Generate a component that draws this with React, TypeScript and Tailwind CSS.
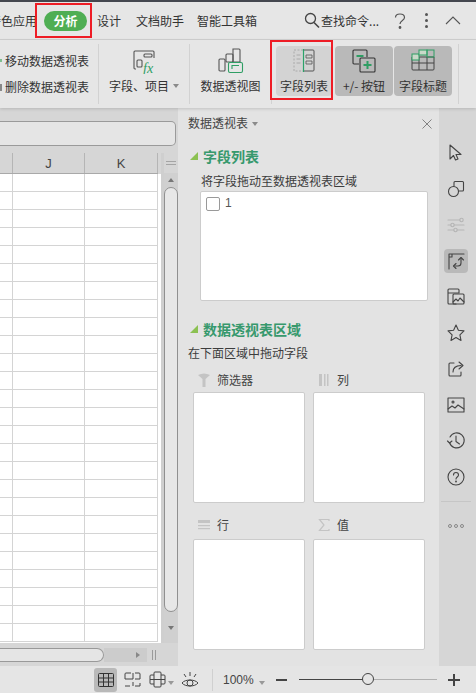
import React from "react";

const G = "#2f9e64";
const D = "#444444";

function Sep({ cls = "" }: { cls?: string }) {
  return <div className={"w-px self-stretch bg-[#d2d2d2] my-[4px] " + cls} />;
}

function Caret({ c = "#8a8a8a" }: { c?: string }) {
  return <span className="inline-block w-0 h-0 border-x-[3.5px] border-x-transparent border-t-[4px]" style={{ borderTopColor: c }} />;
}

function Tri() {
  return (
    <svg width="8" height="8" viewBox="0 0 8 8" className="shrink-0">
      <path d="M8 0V8H0Z" fill="#8cc152" />
    </svg>
  );
}

function SideIcon({ children, active }: { children: React.ReactNode; active?: boolean }) {
  return (
    <div className={"w-[24px] h-[24px] rounded-[4px] flex items-center justify-center " + (active ? "bg-[#b9b9b9]" : "")}>
      <svg width="20" height="20" viewBox="0 0 20 20" fill="none" stroke={D} strokeWidth="1.1" strokeLinejoin="round" strokeLinecap="round">
        {children}
      </svg>
    </div>
  );
}

function FieldBox({ icon, label, labelCls = "" }: { icon: React.ReactNode; label: string; labelCls?: string }) {
  return (
    <div className="w-[112px]">
      <div className={"h-[26px] flex items-center pl-[5px] gap-[7px] text-[12px] text-[#444] " + labelCls}>
        <svg width="12" height="14" viewBox="0 0 12 14" fill="none" className="shrink-0">{icon}</svg>
        <span>{label}</span>
      </div>
      <div className="bg-white border border-[#cccccc] rounded-[2px] h-[111px]" />
    </div>
  );
}

export default function App() {
  const rows = Array.from({ length: 26 });
  return (
    <div className="w-[476px] h-[693px] overflow-hidden flex flex-col bg-[#e4e4e4] text-[#333] text-[12px] leading-none" style={{ fontFamily: '"Noto Sans CJK SC","Liberation Sans",sans-serif' }}>
      <div className="h-[2px] bg-[#44474f] shrink-0" />

      {/* Tabs */}
      <div className="h-[38px] shrink-0 flex items-center relative border-b border-[#d0d0d0] bg-[#e6e6e6] text-[#333]">
        <div className="w-[37px] overflow-hidden flex justify-end shrink-0">
          <span className="whitespace-nowrap">特色应用</span>
        </div>
        <div className="relative ml-[7px] w-[43px] h-[20px] rounded-full bg-[#4fae53] text-white font-bold flex items-center justify-center">
          分析
          <span className="absolute left-[-9px] top-[-8px] w-[57px] h-[35px] border-2 border-[#ee1c25]" />
        </div>
        <span className="ml-[10px]">设计</span>
        <span className="ml-[15px]">文档助手</span>
        <span className="ml-[13px]">智能工具箱</span>
        <svg width="16" height="17" viewBox="0 0 16 17" fill="none" stroke={D} strokeWidth="1.3" className="ml-[47px]">
          <circle cx="6.5" cy="6.5" r="5" />
          <path d="M10 10.5l5 5" strokeWidth="1.6" />
        </svg>
        <span className="ml-[1px] w-[60px] whitespace-nowrap">查找命令...</span>
        <svg width="12" height="16" viewBox="0 0 12 16" fill="none" stroke="#555" strokeWidth="1.2" className="ml-[13px]">
          <path d="M1.5 4.5C1.5 2.3 3.5 1 6 1s4.5 1.4 4.5 3.5C10.500 7.500 6 7.500 6 11" />
          <circle cx="6" cy="14.500" r=".8" fill="#555" />
        </svg>
        <div className="ml-[19px] flex flex-col gap-[3px]">
          <span className="w-[3px] h-[3px] bg-[#555] rounded-full" />
          <span className="w-[3px] h-[3px] bg-[#555] rounded-full" />
          <span className="w-[3px] h-[3px] bg-[#555] rounded-full" />
        </div>
        <svg width="16" height="9" viewBox="0 0 16 9" fill="none" stroke="#555" strokeWidth="1.1" className="ml-[17px]">
          <path d="M1 8l7-7 7 7" />
        </svg>
      </div>

      {/* Ribbon */}
      <div className="h-[68px] shrink-0 flex items-stretch bg-[#e6e6e6] shadow-[0_1px_3px_rgba(0,0,0,0.15)] relative z-10">
        <div className="w-[98px] shrink-0 flex flex-col justify-center gap-[14px] pl-[5px] relative">
          <span className="absolute left-[0px] top-[19px] w-[2px] h-[3px] bg-[#7fbf8f]" />
          <span className="absolute left-[0px] top-[44px] w-[2px] h-[7px] bg-[#888]" />
          <span className="whitespace-nowrap h-[12px] mt-[-1px]">移动数据透视表</span>
          <span className="whitespace-nowrap h-[12px]">删除数据透视表</span>
        </div>
        <Sep />
        <div className="w-[90px] shrink-0 flex flex-col items-center pt-[10px]">
          <svg width="26" height="24" viewBox="0 0 26 24" fill="none" stroke="#555" strokeWidth="1.1" className="ml-[3px]">
            <path d="M3 19H2a1 1 0 0 1-1-1V2a1 1 0 0 1 1-1h18a1 1 0 0 1 1 1v6" />
            <rect x="4" y="10" width="5" height="7" rx="1" />
            <rect x="11" y="4" width="8" height="3" rx="1" />
            <text x="10" y="23" fontSize="14" fontStyle="italic" fill={G} stroke="none" fontFamily="Liberation Serif, serif">fx</text>
          </svg>
          <div className="h-[12px] mt-[6px] flex items-center gap-[4px] whitespace-nowrap">字段、项目<Caret /></div>
        </div>
        <Sep />
        <div className="w-[81px] shrink-0 flex flex-col items-center pt-[8px]">
          <svg width="26" height="26" viewBox="0 0 26 26" fill="none" stroke="#555" strokeWidth="1.1">
            <rect x="1" y="11" width="6" height="12" rx="1" />
            <rect x="8" y="6" width="7" height="8" rx="1" />
            <path d="M15 1h6a1 1 0 0 1 1 1v12h-7z" />
            <rect x="10.500" y="14.500" width="14" height="10" rx="1.500" stroke={G} fill="#e6e6e6" />
            <path d="M14 21v-3.500h7" stroke={G} />
          </svg>
          <div className="h-[12px] mt-[6px] whitespace-nowrap">数据透视图</div>
        </div>
        <Sep />
        <div className="ml-[4px] relative w-[56px] shrink-0 mt-[6px] h-[50px] rounded-[4px] bg-[#d3d3d3] flex flex-col items-center pt-[3px]">
          <svg width="22" height="24" viewBox="0 0 22 24" fill="none" stroke="#555" strokeWidth="1" className="shrink-0">
            <path d="M10 1H1v21h9" stroke="#aaa" strokeDasharray="2 1.500" />
            <path d="M3.500 6h4M3.500 10h4M3.500 14h4" stroke="#aaa" />
            <path d="M11 1h9a1 1 0 0 1 1 1v19a1 1 0 0 1-1 1h-9" />
            <path d="M13 6h6v3h-6zM13 12h6v3h-6z" strokeWidth=".8" />
            <path d="M10.500 0v23" stroke="#2ba36a" strokeWidth="1.2" />
          </svg>
          <div className="h-[12px] mt-[7px] whitespace-nowrap">字段列表</div>
          <span className="absolute left-[-6px] top-[-6px] w-[63px] h-[60px] border-2 border-[#ee1c25]" />
        </div>
        <div className="ml-[3px] w-[58px] shrink-0 mt-[6px] h-[50px] rounded-[4px] bg-[#b9b9b9] flex flex-col items-center pt-[3px]">
          <svg width="24" height="24" viewBox="0 0 24 24" fill="none" stroke="#333" strokeWidth="1.1" className="shrink-0">
            <path d="M7 15H2a1 1 0 0 1-1-1V2a1 1 0 0 1 1-1h12a1 1 0 0 1 1 1v6" />
            <rect x="8" y="9" width="15" height="14" rx="1" />
            <path d="M4.500 7h7" stroke={G} strokeWidth="2" />
            <path d="M11.500 16h8M15.500 12v8" stroke={G} strokeWidth="2" />
          </svg>
          <div className="h-[12px] mt-[7px] whitespace-nowrap">+/- 按钮</div>
        </div>
        <div className="ml-[1px] w-[58px] shrink-0 mt-[6px] h-[50px] rounded-[4px] bg-[#b9b9b9] flex flex-col items-center pt-[3px]">
          <svg width="24" height="24" viewBox="0 0 24 24" fill="none" stroke="#444" strokeWidth="1" className="shrink-0">
            <path d="M1 8h22v12a1 1 0 0 1-1 1H2a1 1 0 0 1-1-1z" />
            <path d="M1 14h22M8 8v13M16 8v13" />
            <rect x="1" y="5" width="7" height="6" stroke={G} fill="#c9d9c9" />
            <rect x="8" y="1" width="8" height="5" stroke={G} fill="#c9d9c9" />
            <rect x="16" y="1" width="7" height="7" stroke={G} />
          </svg>
          <div className="h-[12px] mt-[7px] whitespace-nowrap">字段标题</div>
        </div>
        <div className="ml-[6px]"><Sep cls="h-[60px]" /></div>
      </div>

      {/* Main */}
      <div className="flex-1 min-h-0 flex">
        {/* Sheet */}
        <div className="w-[178px] shrink-0 flex flex-col bg-[#d6d6d6] overflow-hidden">
          <div className="h-[45px] shrink-0 pt-[13px] pr-[2px]">
            <div className="h-[25px] bg-[#e5e5e5] border border-[#9a9a9a] border-l-0 rounded-r-[5px]" />
          </div>
          <div className="h-[490px] flex">
            <div className="w-[158px] shrink-0 flex flex-col">
              <div className="h-[21px] shrink-0 flex border-b border-[#a9a9a9] text-[13px] text-[#444]" style={{ fontFamily: '"Liberation Sans",sans-serif' }}>
                <div className="w-[13px] border-r border-[#b5b5b5]" />
                <div className="w-[72px] border-r border-[#b5b5b5] flex items-center justify-center">J</div>
                <div className="w-[73px] border-r border-[#b5b5b5] flex items-center justify-center">K</div>
              </div>
              <div className="bg-white flex-1 overflow-hidden">
                {rows.map((_, i) => (
                  <div key={i} className="h-[18px] flex border-b border-[#d4d4d4]">
                    <div className="w-[13px] border-r border-[#d4d4d4]" />
                    <div className="w-[72px] border-r border-[#d4d4d4]" />
                    <div className="w-[73px] border-r border-[#d4d4d4]" />
                  </div>
                ))}
              </div>
            </div>
            <div className="w-[3px] shrink-0 bg-white mt-[21px]" />
            <div className="w-[3px] shrink-0 bg-[#cfcfcf]" />
            <div className="w-[14px] shrink-0 flex flex-col items-center bg-[#d0d0d0] relative">
              <div className="h-[20px] w-full bg-[#d6d6d6] flex flex-col items-center justify-center gap-[2px]">
                <span className="w-[10px] h-px bg-[#a5a5a5]" />
                <span className="w-[10px] h-px bg-[#a5a5a5]" />
              </div>
              <div className="h-[14px] flex items-center justify-center">
                <span className="w-0 h-0 border-x-[3.5px] border-x-transparent border-b-[4px] border-b-[#777]" />
              </div>
              <div className="w-[14px] h-[425px] rounded-[7px] bg-[#e7e7e7] border border-[#909090]" />
              <div className="flex-1 flex items-center justify-center">
                <Caret c="#777" />
              </div>
            </div>
          </div>
          <div className="h-[23px] shrink-0 flex items-center bg-[#d6d6d6]">
            <div className="w-[104px] h-[14px] bg-[#e5e5e5] border border-[#999] border-l-0 rounded-r-[7px]" />
            <div className="w-[43px] h-[14px] bg-[#cccccc] flex items-center justify-end pr-[7px]">
              <span className="w-0 h-0 border-y-[3.5px] border-y-transparent border-l-[4px] border-l-[#888]" />
            </div>
            <div className="ml-[5px] flex gap-[2px] h-[10px]">
              <span className="w-px bg-[#9a9a9a]" />
              <span className="w-px bg-[#9a9a9a]" />
            </div>
          </div>
        </div>

        {/* Panel */}
        <div className="w-[261px] shrink-0 bg-[#e3e3e3] flex flex-col">
          <div className="h-[23px] shrink-0 flex items-end pl-[10px] pr-[7px] text-[#444]">
            <span className="h-[14px]">数据透视表</span>
            <span className="ml-[4px] mb-[4px]"><Caret /></span>
            <svg width="10" height="10" viewBox="0 0 10 10" stroke="#777" strokeWidth=".9" className="ml-auto mb-[2px]">
              <path d="M.5.5l9 9M9.500.5l-9 9" />
            </svg>
          </div>
          <div className="mt-[17px] ml-[12px] flex items-center gap-[5px] h-[16px]">
            <Tri />
            <span className="text-[14px] font-bold text-[#37996d]">字段列表</span>
          </div>
          <div className="mt-[11px] ml-[23px] h-[13px] text-[#3c3c3c]">将字段拖动至数据透视表区域</div>
          <div className="mt-[3px] ml-[22px] w-[228px] h-[110px] bg-white border border-[#cccccc] rounded-[2px] flex items-start pt-[5px] pl-[5px] gap-[5px]">
            <span className="w-[14px] h-[14px] bg-white border border-[#999] rounded-[2px]" />
            <span className="text-[#555]" style={{ fontFamily: '"Liberation Sans",sans-serif' }}>1</span>
          </div>
          <div className="mt-[20px] ml-[12px] flex items-center gap-[5px] h-[16px]">
            <Tri />
            <span className="text-[14px] font-bold text-[#37996d]">数据透视表区域</span>
          </div>
          <div className="mt-[10px] ml-[10px] h-[13px] text-[#3c3c3c]">在下面区域中拖动字段</div>
          <div className="mt-[6px] ml-[15px] flex gap-[8px]">
            <FieldBox labelCls="pt-[2px]" label="筛选器" icon={<path d="M0 2q6-3 12 0l-4.500 4v8h-3V6z" fill="#c4c4c4" />} />
            <FieldBox labelCls="pt-[2px]" label="列" icon={<g fill="#c4c4c4"><rect x="1" y="1" width="3" height="12" /><rect x="6" y="1" width="1.500" height="12" /><rect x="9" y="1" width="1.500" height="12" /></g>} />
          </div>
          <div className="mt-[10px] ml-[15px] flex gap-[8px]">
            <FieldBox labelCls="pb-[2px]" label="行" icon={<g fill="#c4c4c4"><rect x="0" y="2" width="12" height="3" /><rect x="0" y="7" width="12" height="1.200" /><rect x="0" y="10" width="12" height="1.200" /></g>} />
            <FieldBox labelCls="pb-[2px]" label="值" icon={<path d="M11 3V1.500H1.500L6 7l-4.500 5.500H11V11" stroke="#c4c4c4" strokeWidth="1.200" />} />
          </div>
        </div>

        {/* Side toolbar */}
        <div className="w-[37px] shrink-0 bg-[#d6d6d6] flex flex-col items-center pt-[33px] gap-[12px] pr-[3px]">
          <SideIcon>
            <path d="M4 2v14l3.500-3.500 2 4.500 2.500-1-2-4.500h5z" />
          </SideIcon>
          <SideIcon>
            <path d="M8 7V3.500a1 1 0 0 1 1-1h7.500a1 1 0 0 1 1 1V11a1 1 0 0 1-1 1H13" />
            <circle cx="7.500" cy="12.500" r="5" />
          </SideIcon>
          <SideIcon>
            <g stroke="#b5b5b5">
              <path d="M2 5h12M2 10h3M8 10h10M2 15h6M11 15h7" />
              <circle cx="15.500" cy="5" r="1.700" />
              <circle cx="6.500" cy="10" r="1.700" />
              <circle cx="9.500" cy="15" r="1.700" />
            </g>
          </SideIcon>
          <SideIcon active>
            <path d="M3 18V3M3 3h15M6 3v3M3 6h3" />
            <path d="M8 15h4a3 3 0 0 0 3-3V7" />
            <path d="M10 12.500L7.500 15l2.500 2.500M12.500 9L15 6.500 17.500 9" />
          </SideIcon>
          <SideIcon>
            <path d="M10 17H3a1 1 0 0 1-1-1V3a1 1 0 0 1 1-1h9a1 1 0 0 1 1 1v3M2 6h11" />
            <rect x="7" y="7" width="11" height="10" rx="1" />
            <path d="M7 15l3-3 2 2 2-3 4 4" />
          </SideIcon>
          <SideIcon>
            <path d="M10 2l2.400 5.200 5.600.7-4.100 3.900 1.100 5.600L10 14.600l-5 2.800 1.100-5.600L2 7.900l5.600-.7z" />
          </SideIcon>
          <SideIcon>
            <path d="M8 4H4a1 1 0 0 0-1 1v11a1 1 0 0 0 1 1h10a1 1 0 0 0 1-1v-3" />
            <path d="M7 13c0-4 3-6.500 8-6.500M13 3l4 3.500-4 3.500" />
          </SideIcon>
          <SideIcon>
            <rect x="2" y="3" width="16" height="14" />
            <circle cx="7" cy="7" r="1" />
            <path d="M2 14l4-3 3 2 3-3 6 4" />
          </SideIcon>
          <SideIcon>
            <path d="M3.500 12a7.500 7.500 0 1 0 .5-5.500" transform="translate(0 -.5)" />
            <path d="M1.500 10l2 2 2.500-2" />
            <path d="M10 5v5.500l3.500 2.500" />
          </SideIcon>
          <SideIcon>
            <circle cx="10" cy="10" r="8" />
            <path d="M7.500 8c0-1.500 1-2.500 2.500-2.500s2.500 1 2.500 2.500c0 2-2.500 2-2.500 4" />
            <circle cx="10" cy="14.500" r=".4" />
          </SideIcon>
          <div className="w-[30px] h-px bg-[#c6c6c6]" />
          <div className="flex gap-[2px] mt-[10px]">
            <span className="w-[4px] h-[4px] rounded-full border border-[#888]" />
            <span className="w-[4px] h-[4px] rounded-full border border-[#888]" />
            <span className="w-[4px] h-[4px] rounded-full border border-[#888]" />
          </div>
        </div>
      </div>

      {/* Status bar */}
      <div className="h-[27px] shrink-0 bg-[#e5e5e5] flex items-center text-[#444]">
        <div className="ml-[94px] w-[23px] h-[24px] rounded-[3px] bg-[#b9b9b9] flex items-center justify-center">
          <svg width="16" height="14" viewBox="0 0 16 14" fill="none" stroke="#333" strokeWidth="1">
            <rect x=".5" y=".5" width="15" height="13" rx="1" />
            <path d="M.5 5h15M.5 9h15M5.500.5v13M10.500.5v13" />
          </svg>
        </div>
        <svg width="17" height="15" viewBox="0 0 17 15" fill="none" stroke="#444" strokeWidth="1" className="ml-[7px]">
          <path d="M7 1H2a1 1 0 0 0-1 1v5h8V1M11 1h4a1 1 0 0 1 1 1v5h-5M1 14h5M9 14v-4M11 14h5v-3" />
        </svg>
        <svg width="17" height="17" viewBox="0 0 17 17" fill="none" stroke="#444" strokeWidth="1" className="ml-[8px]">
          <path d="M5 4H2a1 1 0 0 0-1 1v7a1 1 0 0 0 1 1h3M12 4h3a1 1 0 0 1 1 1v7a1 1 0 0 1-1 1h-3M5 2a1 1 0 0 1 1-1h5a1 1 0 0 1 1 1v13a1 1 0 0 1-1 1H6a1 1 0 0 1-1-1zM1 8.500h15" />
        </svg>
        <span className="ml-[2px]"><Caret c="#999" /></span>
        <svg width="18" height="18" viewBox="0 0 18 18" fill="none" stroke="#444" strokeWidth="1" className="ml-[7px]">
          <path d="M1 12c3-4 13-4 16 0-3 4-13 4-16 0z" />
          <circle cx="9" cy="12" r="3" />
          <path d="M9 1v4M3 3l2 3M15 3l-2 3" />
        </svg>
        <div className="ml-[13px] w-px h-[22px] bg-[#d0d0d0]" />
        <span className="ml-[10px] text-[12px] text-[#444]" style={{ fontFamily: '"Liberation Sans",sans-serif' }}>100%</span>
        <span className="ml-[5px]"><Caret c="#999" /></span>
        <span className="ml-[11px] w-[11px] h-[2px] bg-[#444]" />
        <div className="ml-[12px] w-[138px] h-px bg-[#b0b0b0] relative">
          <div className="w-[65px] h-px bg-[#444]" />
          <span className="absolute left-[63px] top-[-6px] w-[12px] h-[12px] rounded-full bg-[#e5e5e5] border border-[#444]" />
        </div>
        <svg width="12" height="12" viewBox="0 0 12 12" stroke="#444" strokeWidth="2" className="ml-[11px]">
          <path d="M0 6h12M6 0v12" />
        </svg>
      </div>
    </div>
  );
}
